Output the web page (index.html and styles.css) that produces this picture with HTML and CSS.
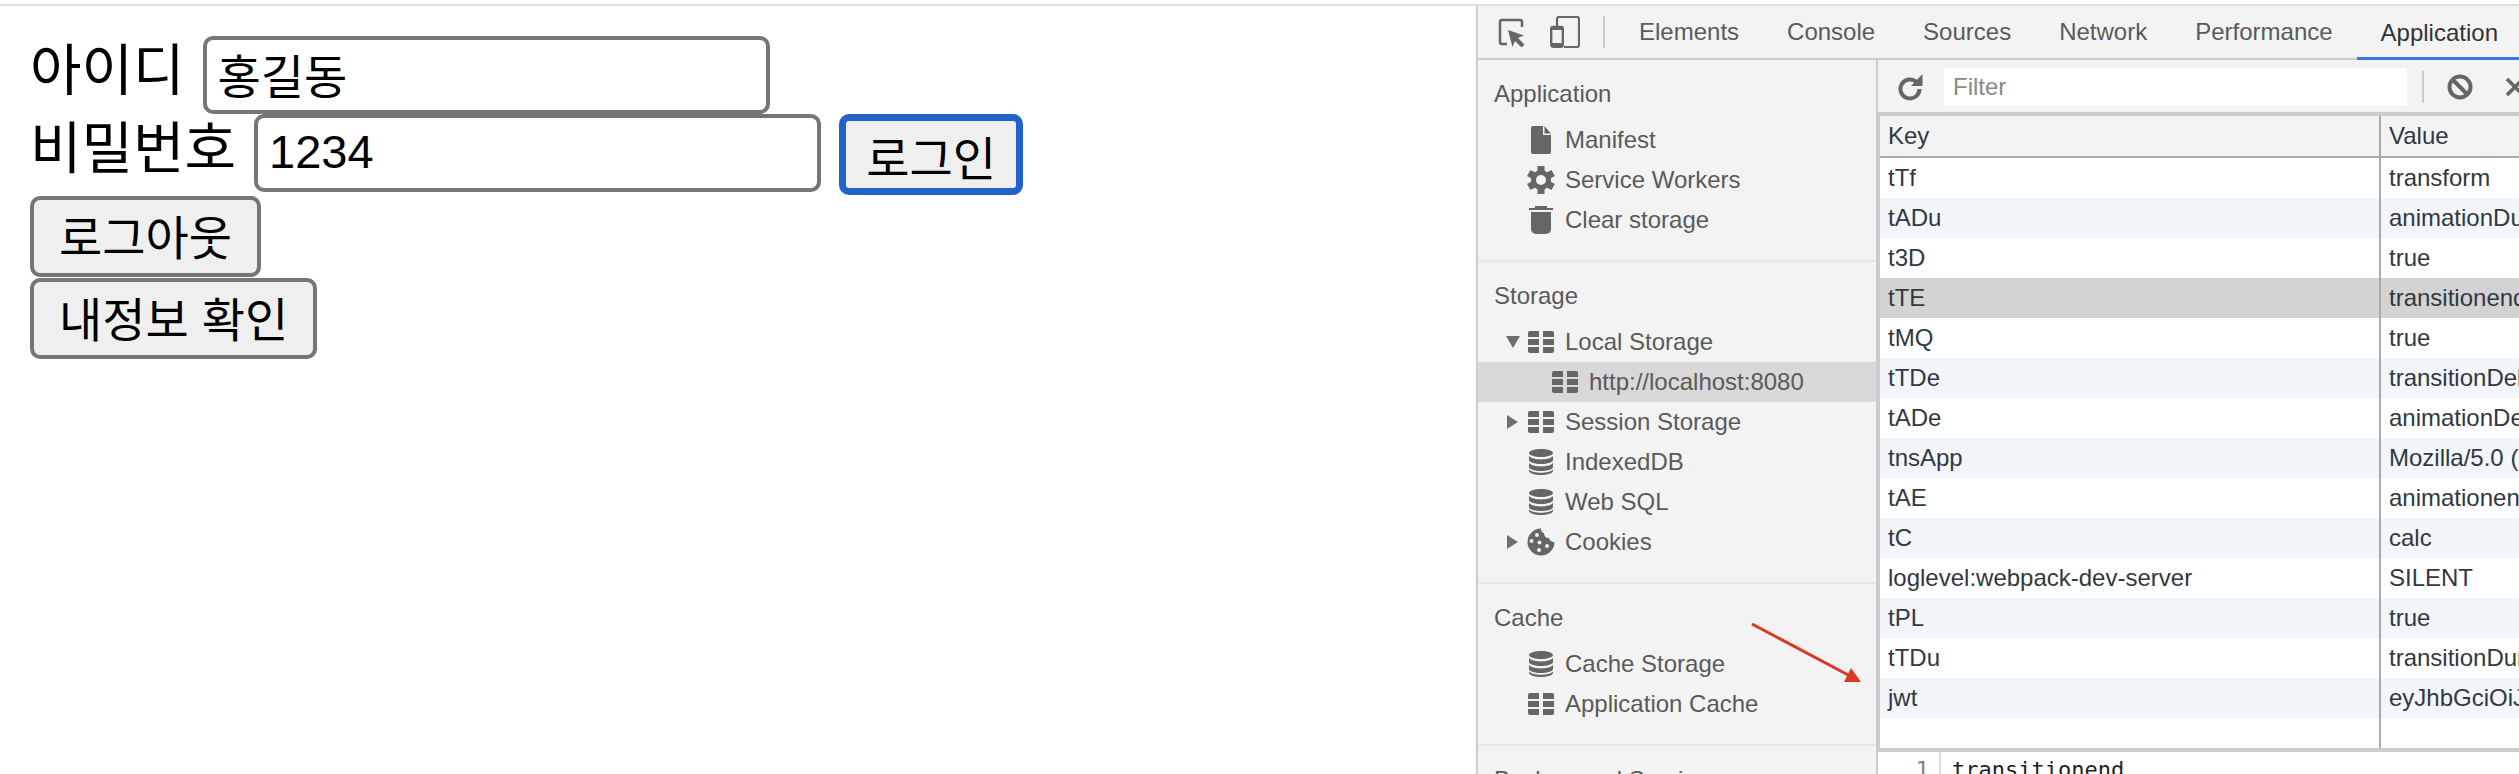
FILE: index.html
```html
<!DOCTYPE html>
<html lang="ko">
<head>
<meta charset="utf-8">
<title>로그인</title>
<link rel="stylesheet" href="styles.css">
</head>
<body>
<svg class="defs" width="0" height="0" aria-hidden="true">
  <symbol id="i-table" viewBox="0 0 26 22"><path d="M2 0h9v6H0V2a2 2 0 0 1 2-2zM15 0h9a2 2 0 0 1 2 2v4H15zM0 8h11v6H0zM15 8h11v6H15zM0 16h11v6H2a2 2 0 0 1-2-2zM15 16h11v4a2 2 0 0 1-2 2h-9z"/></symbol>
  <symbol id="i-db" viewBox="0 0 24 26"><path d="M12 0c6.600 0 12 1.800 12 4s-5.400 4-12 4S0 6.200 0 4s5.400-4 12-4z"/><path d="M0 7c2 2.400 6.800 3.400 12 3.400S22 9.400 24 7v4c0 2.200-5.400 4-12 4S0 13.200 0 11z"/><path d="M0 14c2 2.400 6.800 3.400 12 3.400S22 16.400 24 14v4c0 2.200-5.400 4-12 4S0 20.200 0 18z"/><path d="M0 20.500c2 2.400 6.800 3.200 12 3.200s10-.8 12-3.200V22c0 2.200-5.400 4-12 4S0 24.200 0 22z"/></symbol>
</svg>
<div class="window">
  <main class="page">
    <div class="line">
      <label class="field-label">아이디</label>
      <input class="text-input" type="text" value="홍길동">
    </div>
    <div class="line">
      <label class="field-label">비밀번호</label>
      <input class="text-input" type="text" value="1234">
      <button class="btn btn-focus">로그인</button>
    </div>
    <div class="line"><button class="btn">로그아웃</button></div>
    <div class="line"><button class="btn">내정보 확인</button></div>
  </main>

  <section class="devtools">
    <header class="tabbar">
      <svg class="tool-icon" width="28" height="30" viewBox="0 0 28 30"><path d="M9 27H4a2 2 0 0 1-2-2V5a2 2 0 0 1 2-2h18a2 2 0 0 1 2 2v5" fill="none" stroke="#666" stroke-width="2.500"/><path d="M10 13l16 5.500-6 2.500 6.500 6.500-3 3-6.500-6.500-2.500 6z" fill="#666"/></svg>
      <svg class="tool-icon tool-device" width="30" height="32" viewBox="0 0 30 32"><path d="M7 10V3a2 2 0 0 1 2-2h18a2 2 0 0 1 2 2v26a2 2 0 0 1-2 2H14" fill="none" stroke="#666" stroke-width="2.200"/><rect x="1.200" y="11" width="11.600" height="19.800" rx="2" fill="none" stroke="#666" stroke-width="2.400"/><path d="M1 11h12v3H1z" fill="#666"/><path d="M1 27h12v4H1z" fill="#666"/></svg>
      <span class="tab-sep"></span>
      <nav class="tabs">
        <span class="tab">Elements</span>
        <span class="tab">Console</span>
        <span class="tab">Sources</span>
        <span class="tab">Network</span>
        <span class="tab">Performance</span>
        <span class="tab tab-active">Application</span>
      </nav>
    </header>

    <div class="panes">
      <aside class="sidebar">
        <section class="group">
          <h3 class="group-title">Application</h3>
          <div class="item"><span class="twist"></span><span class="icon"><svg width="20" height="28" viewBox="0 0 20 28"><path d="M2 0h10v9h8v17a2 2 0 0 1-2 2H2a2 2 0 0 1-2-2V2a2 2 0 0 1 2-2z"/><path d="M13.500 0L20 7.500h-6.500z"/></svg></span>Manifest</div>
          <div class="item"><span class="twist"></span><span class="icon"><svg width="28" height="28" viewBox="0 0 28 28"><circle cx="14" cy="14" r="10"/><g><rect x="10.500" y="0" width="7" height="28"/><rect x="10.500" y="0" width="7" height="28" transform="rotate(60 14 14)"/><rect x="10.500" y="0" width="7" height="28" transform="rotate(120 14 14)"/></g><circle class="gear-hole" cx="14" cy="14" r="5"/></svg></span>Service Workers</div>
          <div class="item"><span class="twist"></span><span class="icon"><svg width="24" height="28" viewBox="0 0 24 28"><path d="M6 0h12v2h6v2H0V2h6zM2 6h20v17a5 5 0 0 1-5 5H7a5 5 0 0 1-5-5z"/></svg></span>Clear storage</div>
        </section>
        <section class="group">
          <h3 class="group-title">Storage</h3>
          <div class="item"><span class="twist twist-open"></span><span class="icon"><svg width="26" height="22"><use href="#i-table"/></svg></span>Local Storage</div>
          <div class="item item-child item-selected"><span class="icon"><svg width="26" height="22"><use href="#i-table"/></svg></span>http://localhost:8080</div>
          <div class="item"><span class="twist twist-closed"></span><span class="icon"><svg width="26" height="22"><use href="#i-table"/></svg></span>Session Storage</div>
          <div class="item"><span class="twist"></span><span class="icon"><svg width="24" height="26"><use href="#i-db"/></svg></span>IndexedDB</div>
          <div class="item"><span class="twist"></span><span class="icon"><svg width="24" height="26"><use href="#i-db"/></svg></span>Web SQL</div>
          <div class="item"><span class="twist twist-closed"></span><span class="icon"><svg width="28" height="28" viewBox="0 0 28 28"><path fill-rule="evenodd" d="M14 .5a13.500 13.500 0 1 0 13.500 13.500c-3 0-5-1.500-5.500-4-3 0-5-2-5-5-2 0-3-2-3-4.500zM10 5a2 2 0 1 1 0 4 2 2 0 0 1 0-4zm-5.500 6a2 2 0 1 1 0 4 2 2 0 0 1 0-4zm8 1.500a2 2 0 1 1 0 4 2 2 0 0 1 0-4zm7.500 3.500a2 2 0 1 1 0 4 2 2 0 0 1 0-4zm-8 4a2 2 0 1 1 0 4 2 2 0 0 1 0-4z"/></svg></span>Cookies</div>
        </section>
        <section class="group">
          <h3 class="group-title">Cache</h3>
          <div class="item"><span class="twist"></span><span class="icon"><svg width="24" height="26"><use href="#i-db"/></svg></span>Cache Storage</div>
          <div class="item"><span class="twist"></span><span class="icon"><svg width="26" height="22"><use href="#i-table"/></svg></span>Application Cache</div>
        </section>
        <section class="group">
          <h3 class="group-title">Background Services</h3>
        </section>
      </aside>

      <div class="content">
        <div class="filterbar">
          <svg class="refresh" width="26" height="28" viewBox="0 0 26 28"><path d="M22.500 16a9.500 9.500 0 1 1-3-7" fill="none" stroke="#666" stroke-width="4"/><path d="M14 13h11.500V1z" fill="#666"/></svg>
          <div class="filter">Filter</div>
          <span class="filter-sep"></span>
          <svg class="block" width="26" height="26" viewBox="0 0 26 26"><circle cx="13" cy="13" r="10.500" fill="none" stroke="#666" stroke-width="4"/><path d="M6 6l14 14" stroke="#666" stroke-width="4"/></svg>
          <svg class="close" width="20" height="20" viewBox="0 0 20 20"><path d="M2 2l16 16M18 2L2 18" stroke="#666" stroke-width="3.500"/></svg>
        </div>

        <div class="grid">
          <div class="row row-head"><div class="cell-key">Key</div><div class="cell-val">Value</div></div>
          <div class="row"><div class="cell-key">tTf</div><div class="cell-val">transform</div></div>
          <div class="row row-alt"><div class="cell-key">tADu</div><div class="cell-val">animationDuration</div></div>
          <div class="row"><div class="cell-key">t3D</div><div class="cell-val">true</div></div>
          <div class="row row-selected"><div class="cell-key">tTE</div><div class="cell-val">transitionend</div></div>
          <div class="row"><div class="cell-key">tMQ</div><div class="cell-val">true</div></div>
          <div class="row row-alt"><div class="cell-key">tTDe</div><div class="cell-val">transitionDelay</div></div>
          <div class="row"><div class="cell-key">tADe</div><div class="cell-val">animationDelay</div></div>
          <div class="row row-alt"><div class="cell-key">tnsApp</div><div class="cell-val">Mozilla/5.0 (Macintosh; Intel Mac OS X)</div></div>
          <div class="row"><div class="cell-key">tAE</div><div class="cell-val">animationend</div></div>
          <div class="row row-alt"><div class="cell-key">tC</div><div class="cell-val">calc</div></div>
          <div class="row"><div class="cell-key">loglevel:webpack-dev-server</div><div class="cell-val">SILENT</div></div>
          <div class="row row-alt"><div class="cell-key">tPL</div><div class="cell-val">true</div></div>
          <div class="row"><div class="cell-key">tTDu</div><div class="cell-val">transitionDuration</div></div>
          <div class="row row-alt"><div class="cell-key">jwt</div><div class="cell-val">eyJhbGciOiJIUzI1NiJ9</div></div>
          <div class="row row-fill"><div class="cell-key"></div><div class="cell-val"></div></div>
        </div>

        <div class="preview">
          <div class="gutter">1</div>
          <div class="code">transitionend</div>
        </div>
      </div>
    </div>
  </section>
</div>
<svg class="annotation" width="112" height="62" viewBox="0 0 112 62"><path d="M1 1l100 53" stroke="#d9391f" stroke-width="3" fill="none"/><path d="M110 59H93l7-14z" fill="#d9391f"/></svg>
</body>
</html>
```
FILE: styles.css
```css
* { box-sizing: border-box; }

html, body {
  margin: 0;
  height: 774px;
  overflow: hidden;
  background: #fff;
}

body {
  position: relative;
  padding-top: 4px;
  font-family: "Liberation Sans", Arial, sans-serif;
}

.defs { position: absolute; }

.window {
  display: flex;
  height: 770px;
  border-top: 2px solid #dedede;
}

/* Page under test */
.page {
  width: 1476px;
  flex: none;
  padding: 30px 0 0 30px;
  display: flex;
  flex-direction: column;
  font-family: "Liberation Sans", "Noto Sans CJK KR", sans-serif;
}

.line {
  height: 82px;
  display: flex;
  align-items: flex-start;
}

.line:first-child { height: 78px; }

.field-label {
  font-size: 56px;
  line-height: 70px;
  color: #000;
  margin-right: 18px;
  white-space: nowrap;
}

.text-input {
  width: 567px;
  height: 78px;
  border: 4px solid #767676;
  border-radius: 10px;
  padding: 0 11px 4px;
  font: 47px "Liberation Sans", "Noto Sans CJK KR", sans-serif;
  color: #000;
  background: #fff;
  outline: none;
}

.btn {
  height: 81px;
  padding: 0 25px 5px;
  border: 4px solid #767676;
  border-radius: 10px;
  background: #efefef;
  color: #000;
  font: 47px "Liberation Sans", "Noto Sans CJK KR", sans-serif;
  white-space: nowrap;
}

.btn-focus {
  margin-left: 18px;
  width: 184px;
  padding: 0 0 5px;
  border: 7px solid #2162cb;
  border-radius: 10px;
}

/* DevTools frame */
.devtools {
  flex: 1;
  min-width: 0;
  border-left: 2px solid #ccc;
  background: #f3f3f3;
  display: flex;
  flex-direction: column;
  font-size: 24px;
  color: #5a5a5a;
}

.tabbar {
  height: 54px;
  flex: none;
  display: flex;
  align-items: center;
  border-bottom: 2px solid #ccc;
  padding-left: 20px;
  position: relative;
}

.tool-icon { flex: none; }
.tool-device { margin-left: 24px; }

.tab-sep {
  width: 2px;
  height: 32px;
  background: #ccc;
  margin-left: 23px;
  flex: none;
}

.tabs {
  display: flex;
  flex: 1;
  min-width: 0;
  height: 100%;
  margin-left: 10px;
}

.tab {
  display: flex;
  align-items: center;
  padding: 0 24px;
  white-space: nowrap;
}

.tab-active {
  color: #333;
  margin-bottom: -2px;
  border-bottom: 3px solid #3a76e0;
  padding-top: 3px;
  flex: 1;
}

.panes {
  flex: 1;
  min-height: 0;
  display: flex;
}

/* Sidebar */
.sidebar {
  width: 400px;
  flex: none;
  border-right: 2px solid #ccc;
  overflow: hidden;
}

.group {
  border-bottom: 2px solid #e8e8e8;
  padding: 13px 0 20px;
}

.group-title {
  margin: 0 0 5px;
  padding-left: 16px;
  height: 42px;
  display: flex;
  align-items: center;
  font-size: 24px;
  font-weight: 400;
  color: #5a5a5a;
}

.item {
  height: 40px;
  display: flex;
  align-items: center;
  white-space: nowrap;
  padding-left: 25px;
}

.item-child { padding-left: 73px; }
.item-selected { background: #d8d8d8; }

.twist {
  width: 24px;
  flex: none;
  display: flex;
  justify-content: center;
  padding-right: 5px;
}

.twist-open::before {
  content: "";
  border-left: 7px solid transparent;
  border-right: 7px solid transparent;
  border-top: 12px solid #6e6e6e;
}

.twist-closed::before {
  content: "";
  border-top: 7px solid transparent;
  border-bottom: 7px solid transparent;
  border-left: 11px solid #6e6e6e;
}

.icon {
  width: 28px;
  margin-right: 10px;
  flex: none;
  display: flex;
  justify-content: center;
  fill: #666;
}

.gear-hole { fill: #f3f3f3; }

/* Storage table */
.content {
  flex: 1;
  min-width: 0;
  display: flex;
  flex-direction: column;
  overflow: hidden;
}

.filterbar {
  height: 54px;
  flex: none;
  display: flex;
  align-items: center;
  border-bottom: 2px solid #ccc;
  padding: 2px 0 0 19px;
}

.refresh { flex: none; }

.filter {
  width: 463px;
  height: 38px;
  margin-left: 21px;
  padding-left: 9px;
  background: #fff;
  color: #8a8a8a;
  display: flex;
  align-items: center;
  flex: none;
}

.filter-sep {
  width: 2px;
  height: 32px;
  background: #ccc;
  margin-left: 15px;
  flex: none;
}

.block { margin-left: 23px; flex: none; }
.close { margin-left: 32px; flex: none; }

.grid {
  height: 638px;
  flex: none;
  border: solid #ccc;
  border-width: 2px 0 4px 2px;
  display: flex;
  flex-direction: column;
  color: #303942;
  background: #fff;
}

.row {
  height: 40px;
  flex: none;
  display: grid;
  grid-template-columns: 499px 1fr;
  align-items: stretch;
}

.row-head {
  height: 42px;
  background: #f3f3f3;
  border-bottom: 2px solid #aaa;
}

.row-alt { background: #f2f5fa; }
.row-selected { background: #d3d3d3; }
.row-fill { flex: 1; }

.cell-key,
.cell-val {
  padding-left: 8px;
  line-height: 40px;
  white-space: nowrap;
  overflow: hidden;
}

.cell-val { border-left: 2px solid #aaa; }

/* Preview */
.preview {
  flex: 1;
  display: flex;
  background: #fff;
  font: 22px/36px "DejaVu Sans Mono", "Liberation Mono", monospace;
  color: #222;
}

.gutter {
  width: 63px;
  border-right: 2px solid #e0e0e0;
  text-align: right;
  padding-right: 10px;
  color: #808080;
}

.code { padding-left: 11px; }

/* Red arrow added to the screenshot */
.annotation {
  position: absolute;
  left: 1751px;
  top: 623px;
}
```
